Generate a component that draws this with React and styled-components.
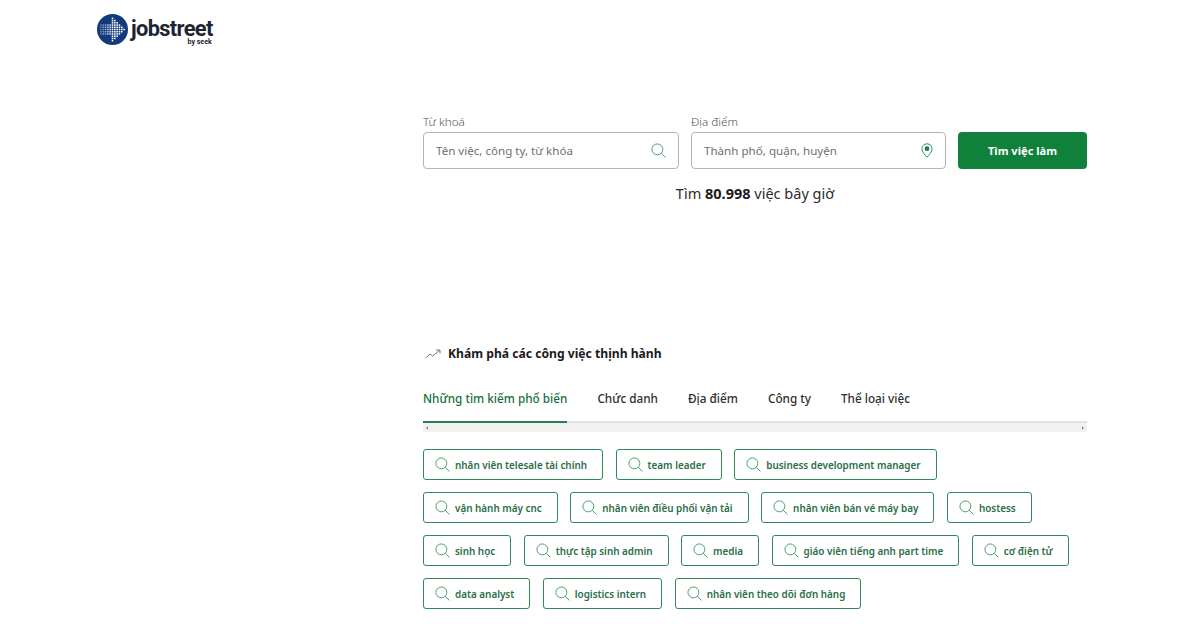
import React from "react";
import styled, { createGlobalStyle } from "styled-components";

const GlobalStyle = createGlobalStyle`
  html, body {
    margin: 0;
    padding: 0;
    background: #fff;
    font-family: "Noto Sans", "Open Sans", sans-serif;
    color: #1c1c1c;
  }
`;

const Page = styled.div`
  width: 1200px;
  height: 630px;
  overflow: hidden;
`;

const Header = styled.header`
  height: 122px;
  box-sizing: border-box;
  padding: 14px 0 0 97px;
`;

const Logo = styled.div`
  display: flex;
  align-items: flex-start;
  gap: 3px;
`;

const LogoText = styled.div`
  display: flex;
  flex-direction: column;
  align-items: flex-end;
  color: #1d2433;
`;

const LogoName = styled.span`
  font-family: "Roboto", sans-serif;
  font-size: 21.8px;
  font-weight: 700;
  line-height: 19px;
  margin-top: 5px;
  letter-spacing: -0.65px;
`;

const LogoSeek = styled.span`
  font-family: "Roboto", sans-serif;
  font-size: 7px;
  font-weight: 700;
  line-height: 8px;
  margin-right: 1px;
`;

const Main = styled.main`
  width: 664px;
  margin-left: 423px;
`;

const SearchForm = styled.form`
  display: flex;
  align-items: flex-end;
  gap: 12px;
  margin-top: -10px;
`;

const Field = styled.label`
  display: flex;
  flex-direction: column;
  width: ${(p) => p.$width}px;
`;

const FieldLabel = styled.span`
  font-size: 11.7px;
  font-weight: 300;
  line-height: 18px;
  margin-bottom: 2px;
  color: #555;
`;

const InputBox = styled.div`
  height: 37px;
  box-sizing: border-box;
  border: 1px solid #b5b5b5;
  border-radius: 4px;
  display: flex;
  align-items: center;
  justify-content: space-between;
  padding: 0 12px 0 12px;
`;

const Placeholder = styled.span`
  font-size: 11.6px;
  line-height: 18px;
  padding-top: 1px;
  color: #707070;
`;

const SearchButton = styled.button`
  width: 129px;
  height: 37px;
  border: none;
  border-radius: 4px;
  background: #10813a;
  color: #fff;
  font-family: inherit;
  font-size: 11.1px;
  font-weight: 700;
`;

const JobCount = styled.p`
  margin: 13px 0 0;
  text-align: center;
  font-size: 14.5px;
  line-height: 22px;
  color: #2b2b2b;

  strong {
    font-weight: 700;
    color: #1c1c1c;
  }
`;

const Trending = styled.section`
  margin-top: 140px;
`;

const TrendingTitle = styled.h2`
  display: flex;
  align-items: center;
  gap: 7px;
  margin: 0 0 0 2px;
  font-size: 12.15px;
  line-height: 20px;
  font-weight: 700;
  color: #1a1a1a;
`;

const Tabs = styled.div`
  display: flex;
  gap: 30px;
  margin-top: 14px;
  height: 45px;
  box-sizing: border-box;
`;

const Tab = styled.div`
  height: 45px;
  box-sizing: border-box;
  padding-top: 10px;
  font-size: 11.75px;
  line-height: 20px;
  font-weight: 500;
  color: ${(p) => (p.$active ? "#17703a" : "#2e2e2e")};
  border-bottom: 2px solid ${(p) => (p.$active ? "#2f7d4f" : "transparent")};
  position: relative;
  z-index: 1;
`;

const ScrollTrack = styled.div`
  height: 11px;
  margin-top: -2px;
  box-sizing: border-box;
  border-top: 2px solid #e2e2e2;
  background: #f1f1f1;
  display: flex;
  align-items: center;
  justify-content: space-between;
  padding: 0 3px;
`;

const ScrollArrow = styled.span`
  width: 0;
  height: 0;
  border-top: 2px solid transparent;
  border-bottom: 2px solid transparent;
  ${(p) =>
    p.$right ? "border-left: 2px solid #8a8a8a;" : "border-right: 2px solid #8a8a8a;"}
`;

const ChipList = styled.div`
  display: flex;
  flex-direction: column;
  gap: 12px;
  margin-top: 17px;
`;

const ChipRow = styled.div`
  display: flex;
  gap: 12.5px;
`;

const Chip = styled.a`
  height: 31px;
  box-sizing: border-box;
  border: 1px solid #2f8a57;
  border-radius: 3px;
  display: flex;
  align-items: center;
  gap: 5px;
  padding: 0 15px 0 11px;
  font-size: 9.88px;
  font-weight: 600;
  color: #2a6e48;
  white-space: nowrap;
`;

const SearchIcon = ({ size = 15, color = "#3d9a68" }) => (
  <svg width={size} height={size} viewBox="0 0 16 16" fill="none" stroke={color} strokeWidth="1">
    <circle cx="6.8" cy="6.8" r="5.8" />
    <path d="M11 11l4.4 4.4" />
  </svg>
);

const PinIcon = () => (
  <svg width="12" height="15" viewBox="0 0 12 15">
    <path
      d="M6 .8C3 .8.9 3 .9 5.7.9 9 4 11.8 6 14.2 8 11.8 11.100 9 11.100 5.700 11.100 3 9 .8 6 .8z"
      fill="none"
      stroke="#2f9160"
      strokeWidth="1"
    />
    <circle cx="6" cy="5.700" r="2.400" fill="#1d7d4a" />
  </svg>
);

const TrendIcon = () => (
  <svg width="16" height="10" viewBox="0 0 16 10" fill="none" stroke="#555" strokeWidth="0.8">
    <path d="M.5 9l4.500-4 2.500 2L14.500 1.500" />
    <path d="M11 1h4v3.500" />
  </svg>
);

// arrow made of dots: [x, half height in rows, opacity]
const arrowColumns = [
  [4, 2, 0.35],
  [6.4, 2, 0.45],
  [8.8, 2, 0.55],
  [11.2, 2, 0.7],
  [13.6, 2, 0.8],
  [16, 5, 1],
  [18.4, 4, 1],
  [20.8, 3, 1],
  [23.2, 2, 1],
  [25.6, 1, 1],
  [28, 0, 1],
];

const LogoMark = () => (
  <svg width="31" height="31" viewBox="0 0 32 32">
    <circle cx="16" cy="16" r="16" fill="#123a7d" />
    {arrowColumns.flatMap(([x, half, o]) => {
      const rows = [];
      for (let r = -half; r <= half; r++) {
        rows.push(
          <rect
            key={`${x}-${r}`}
            x={x - 0.8}
            y={15.2 + r * 2.3}
            width="1.600"
            height="1.600"
            fill="#fff"
            opacity={o}
          />
        );
      }
      return rows;
    })}
  </svg>
);

const tabs = [
  "Những tìm kiếm phổ biến",
  "Chức danh",
  "Địa điểm",
  "Công ty",
  "Thể loại việc",
];

const chipRows = [
  ["nhân viên telesale tài chính", "team leader", "business development manager"],
  ["vận hành máy cnc", "nhân viên điều phối vận tải", "nhân viên bán vé máy bay", "hostess"],
  ["sinh học", "thực tập sinh admin", "media", "giáo viên tiếng anh part time", "cơ điện tử"],
  ["data analyst", "logistics intern", "nhân viên theo dõi đơn hàng"],
];

export default function App() {
  return (
    <Page>
      <GlobalStyle />
      <Header>
        <Logo>
          <LogoMark />
          <LogoText>
            <LogoName>jobstreet</LogoName>
            <LogoSeek>by seek</LogoSeek>
          </LogoText>
        </Logo>
      </Header>
      <Main>
        <SearchForm>
          <Field $width={256}>
            <FieldLabel>Từ khoá</FieldLabel>
            <InputBox>
              <Placeholder>Tên việc, công ty, từ khóa</Placeholder>
              <SearchIcon />
            </InputBox>
          </Field>
          <Field $width={255}>
            <FieldLabel>Địa điểm</FieldLabel>
            <InputBox>
              <Placeholder>Thành phố, quận, huyện</Placeholder>
              <PinIcon />
            </InputBox>
          </Field>
          <SearchButton type="button">Tìm việc làm</SearchButton>
        </SearchForm>
        <JobCount>
          Tìm <strong>80.998</strong> việc bây giờ
        </JobCount>
        <Trending>
          <TrendingTitle>
            <TrendIcon />
            Khám phá các công việc thịnh hành
          </TrendingTitle>
          <Tabs>
            {tabs.map((t, i) => (
              <Tab key={t} $active={i === 0}>
                {t}
              </Tab>
            ))}
          </Tabs>
          <ScrollTrack>
            <ScrollArrow />
            <ScrollArrow $right />
          </ScrollTrack>
          <ChipList>
            {chipRows.map((row) => (
              <ChipRow key={row[0]}>
                {row.map((c) => (
                  <Chip key={c}>
                    <SearchIcon />
                    {c}
                  </Chip>
                ))}
              </ChipRow>
            ))}
          </ChipList>
        </Trending>
      </Main>
    </Page>
  );
}
